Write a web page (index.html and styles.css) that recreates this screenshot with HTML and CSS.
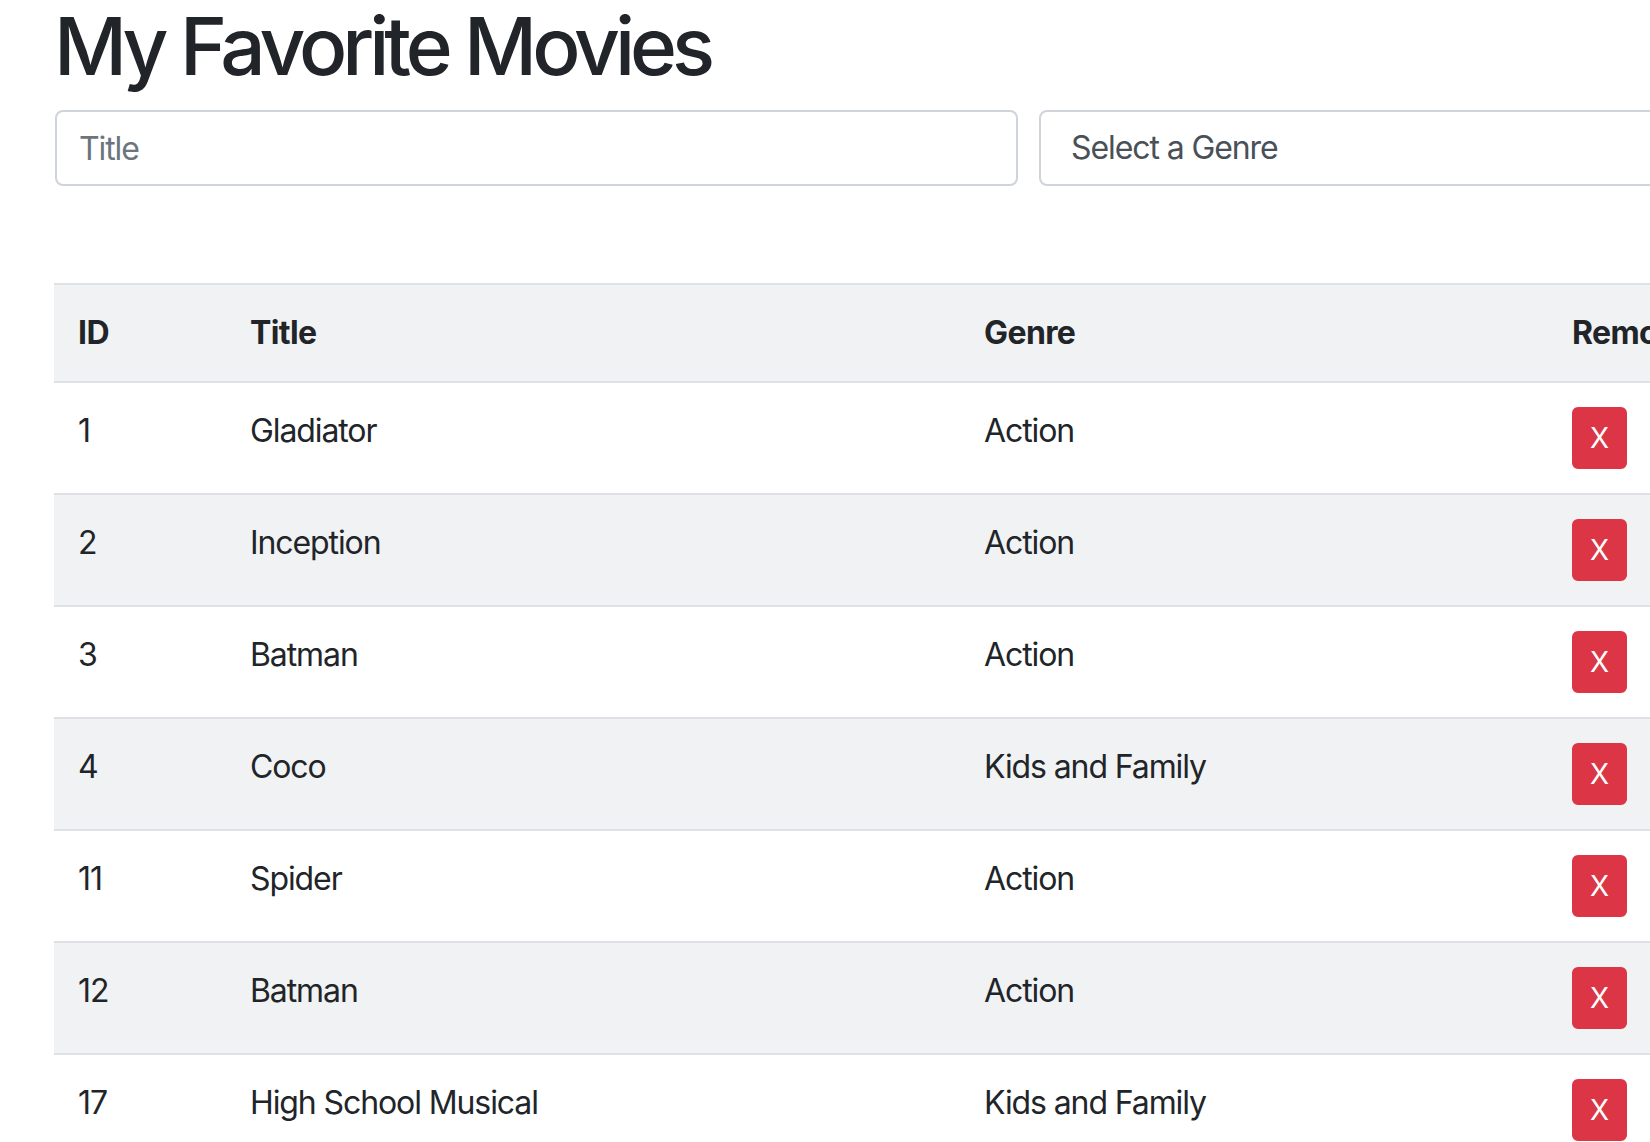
FILE: index.html
```html
<!DOCTYPE html>
<html lang="en">
<head>
<meta charset="utf-8">
<title>My Favorite Movies</title>
<link rel="stylesheet" href="styles.css">
</head>
<body>
<main class="container">
  <h1 class="page-title">My Favorite Movies</h1>
  <form class="form-row">
    <div class="col"><input class="form-control" type="text" placeholder="Title"></div>
    <div class="col"><select class="form-control form-select"><option>Select a Genre</option></select></div>
  </form>
  <table class="table">
    <thead>
      <tr><th class="c-id">ID</th><th class="c-title">Title</th><th class="c-genre">Genre</th><th class="c-remove">Remove</th></tr>
    </thead>
    <tbody>
      <tr><td>1</td><td>Gladiator</td><td>Action</td><td><button class="btn-remove" type="button">X</button></td></tr>
      <tr><td>2</td><td>Inception</td><td>Action</td><td><button class="btn-remove" type="button">X</button></td></tr>
      <tr><td>3</td><td>Batman</td><td>Action</td><td><button class="btn-remove" type="button">X</button></td></tr>
      <tr><td>4</td><td>Coco</td><td>Kids and Family</td><td><button class="btn-remove" type="button">X</button></td></tr>
      <tr><td>11</td><td>Spider</td><td>Action</td><td><button class="btn-remove" type="button">X</button></td></tr>
      <tr><td>12</td><td>Batman</td><td>Action</td><td><button class="btn-remove" type="button">X</button></td></tr>
      <tr><td>17</td><td>High School Musical</td><td>Kids and Family</td><td><button class="btn-remove" type="button">X</button></td></tr>
    </tbody>
  </table>
</main>
</body>
</html>
```

FILE: styles.css
```css
html, body {
  margin: 0;
  padding: 0;
  overflow: hidden;
  background: #fff;
}

body {
  font-family: Inter, "Liberation Sans", sans-serif;
  font-size: 32px;
  line-height: 48px;
  color: #212529;
  letter-spacing: -1.1px;
}

.container {
  width: 1948px;
  padding-left: 54px;
}

.page-title {
  font-size: 80px;
  font-weight: 500;
  line-height: 96px;
  margin: -2px 0 16px 0;
  letter-spacing: -5px;
}

.form-row {
  display: flex;
  gap: 21px;
  margin: 0 0 97px 1px;
}

.col {
  flex: 1 1 0;
}

.form-control {
  display: block;
  box-sizing: border-box;
  width: 100%;
  height: 76px;
  padding: 12px 24px 12px 22px;
  font-family: inherit;
  font-size: 32px;
  line-height: 48px;
  letter-spacing: -1.1px;
  color: #495057;
  background: #fff;
  border: 2px solid #ced4da;
  border-radius: 8px;
  outline: none;
}

.form-control::placeholder {
  color: #6c757d;
}

.form-select {
  appearance: none;
  -webkit-appearance: none;
  padding-left: 30px;
}

.table {
  width: 100%;
  border-collapse: collapse;
  color: #212529;
}

.table th,
.table td {
  padding: 24px;
  border-top: 2px solid #dee2e6;
  text-align: left;
  vertical-align: top;
  line-height: 48px;
}

.table th {
  font-weight: 700;
  letter-spacing: -0.6px;
}

.table thead tr,
.table tbody tr:nth-child(even) {
  background: #f1f2f3;
}

.c-id { width: 124px; }
.c-title { width: 686px; }
.c-genre { width: 540px; }

.btn-remove {
  display: block;
  box-sizing: border-box;
  height: 62px;
  padding: 8px 16px;
  font-family: inherit;
  font-size: 28px;
  line-height: 42px;
  letter-spacing: 0;
  color: #fff;
  background: #dc3545;
  border: 2px solid #dc3545;
  border-radius: 6px;
}
```
